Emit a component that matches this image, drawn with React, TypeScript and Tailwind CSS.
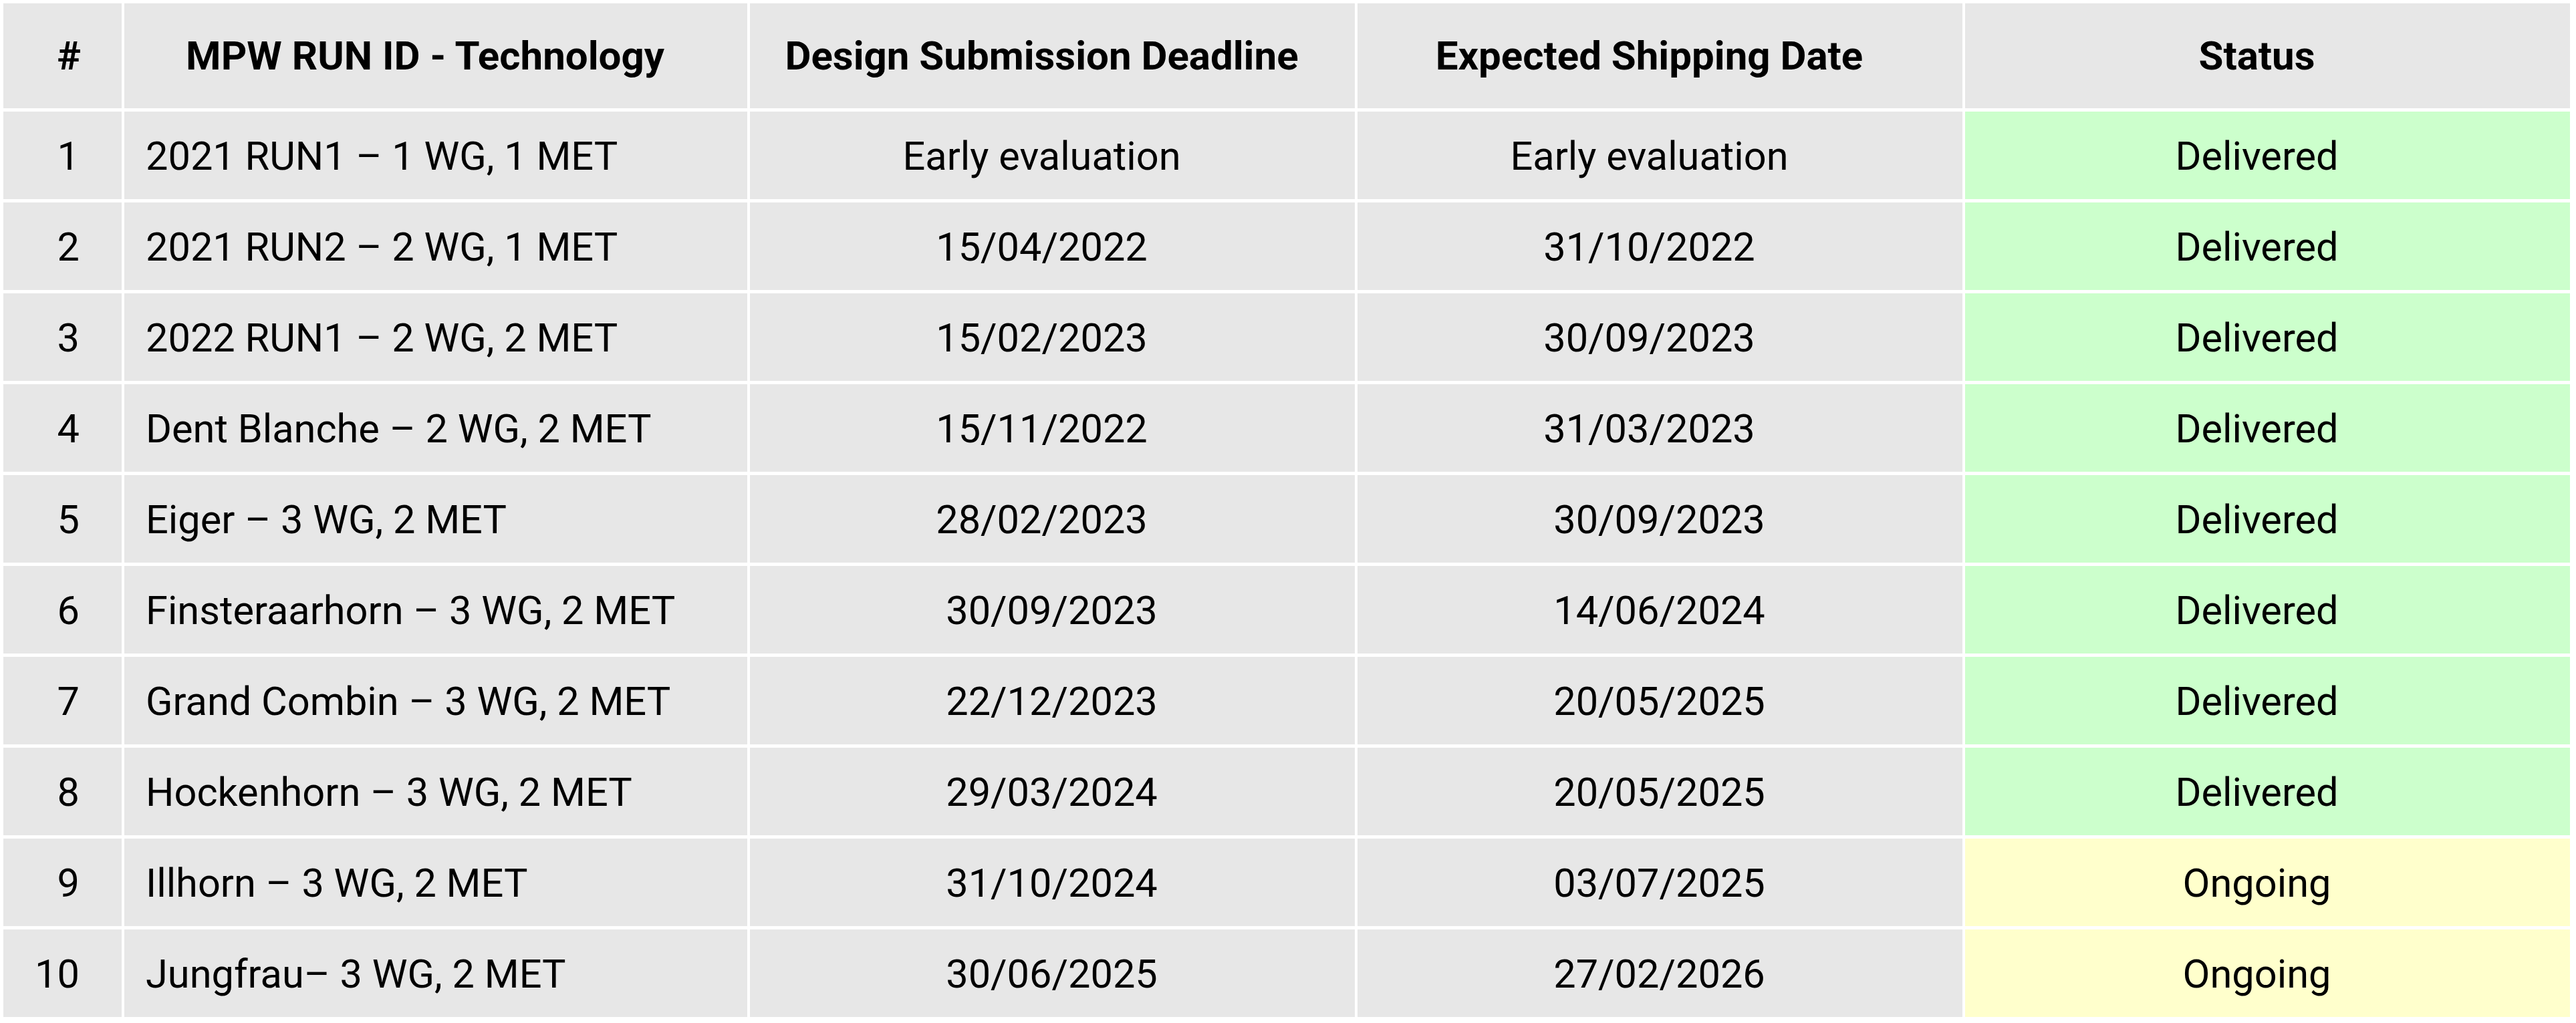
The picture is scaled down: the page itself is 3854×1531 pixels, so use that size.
import React from "react";

type Row = {
  n: string;
  name: string;
  design: string;
  designShift?: boolean;
  ship: string;
  shipShift?: boolean;
  status: "Delivered" | "Ongoing";
};

const rows: Row[] = [
  { n: "1", name: "2021 RUN1 – 1 WG, 1 MET", design: "Early evaluation", ship: "Early evaluation", status: "Delivered" },
  { n: "2", name: "2021 RUN2 – 2 WG, 1 MET", design: "15/04/2022", ship: "31/10/2022", status: "Delivered" },
  { n: "3", name: "2022 RUN1 – 2 WG, 2 MET", design: "15/02/2023", ship: "30/09/2023", status: "Delivered" },
  { n: "4", name: "Dent Blanche – 2 WG, 2 MET", design: "15/11/2022", ship: "31/03/2023", status: "Delivered" },
  { n: "5", name: "Eiger – 3 WG, 2 MET", design: "28/02/2023", ship: "30/09/2023", shipShift: true, status: "Delivered" },
  { n: "6", name: "Finsteraarhorn – 3 WG, 2 MET", design: "30/09/2023", designShift: true, ship: "14/06/2024", shipShift: true, status: "Delivered" },
  { n: "7", name: "Grand Combin – 3 WG, 2 MET", design: "22/12/2023", designShift: true, ship: "20/05/2025", shipShift: true, status: "Delivered" },
  { n: "8", name: "Hockenhorn – 3 WG, 2 MET", design: "29/03/2024", designShift: true, ship: "20/05/2025", shipShift: true, status: "Delivered" },
  { n: "9", name: "Illhorn – 3 WG, 2 MET", design: "31/10/2024", designShift: true, ship: "03/07/2025", shipShift: true, status: "Ongoing" },
  { n: "10", name: "Jungfrau– 3 WG, 2 MET", design: "30/06/2025", designShift: true, ship: "27/02/2026", shipShift: true, status: "Ongoing" },
];

export default function App() {
  return (
    <div className="w-[3854px] h-[1531px] bg-white pt-[5px] pl-[5px] font-['Roboto',sans-serif] text-black text-[60px] leading-none">
      <div className="grid grid-cols-[177px_932px_905px_905px_905px] grid-rows-[157px_repeat(10,131px)] gap-x-[4px] gap-y-[5px]">
        <div className="bg-[#e7e7e7] flex items-center justify-end pr-[61px] font-bold">#</div>
        <div className="bg-[#e7e7e7] flex items-center justify-center pr-[32px] font-bold">MPW RUN ID - Technology</div>
        <div className="bg-[#e7e7e7] flex items-center justify-center pr-[32px] font-bold">Design Submission Deadline</div>
        <div className="bg-[#e7e7e7] flex items-center justify-center pr-[32px] font-bold">Expected Shipping Date</div>
        <div className="bg-[#e7e7e7] flex items-center justify-center pr-[32px] font-bold">Status</div>
        {rows.map((r) => (
          <React.Fragment key={r.n}>
            <div className="bg-[#e7e7e7] flex items-center justify-end pr-[63px] pt-[5px] text-[59.5px]">{r.n}</div>
            <div className="bg-[#e7e7e7] flex items-center justify-start pl-[32px] pt-[5px] text-[59.5px]">{r.name}</div>
            <div className={r.designShift ? "bg-[#e7e7e7] flex items-center justify-center pl-[30px] pr-[32px] pt-[5px] text-[59.5px]" : "bg-[#e7e7e7] flex items-center justify-center pr-[32px] pt-[5px] text-[59.5px]"}>{r.design}</div>
            <div className={r.shipShift ? "bg-[#e7e7e7] flex items-center justify-center pl-[30px] pr-[32px] pt-[5px] text-[59.5px]" : "bg-[#e7e7e7] flex items-center justify-center pr-[32px] pt-[5px] text-[59.5px]"}>{r.ship}</div>
            <div className={r.status === "Delivered" ? "bg-[#ccffcc] flex items-center justify-center pr-[32px] pt-[5px] text-[59.5px]" : "bg-[#ffffcc] flex items-center justify-center pr-[32px] pt-[5px] text-[59.5px]"}>{r.status}</div>
          </React.Fragment>
        ))}
      </div>
    </div>
  );
}
